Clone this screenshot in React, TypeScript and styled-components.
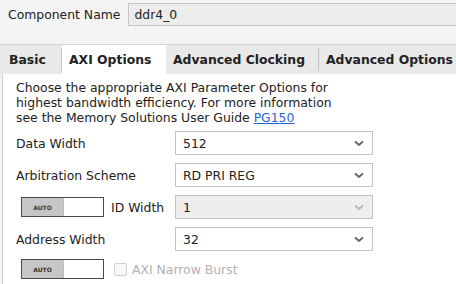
import styled, { createGlobalStyle } from 'styled-components';

const GlobalStyle = createGlobalStyle`
  html, body {
    margin: 0;
    padding: 0;
    background: #f4f4f4;
  }
  body {
    font-family: "DejaVu Sans", "Liberation Sans", sans-serif;
    font-size: 12.4px;
    color: #222;
  }
`;

const Page = styled.div`
  width: 456px;
  height: 284px;
  overflow: hidden;
  display: flex;
  flex-direction: column;
`;

const Header = styled.div`
  flex-shrink: 0;
  display: flex;
  align-items: center;
  gap: 8px;
  padding: 3px 0 0 8px;
  height: 23px;
`;

const NameInput = styled.div`
  flex: 1;
  height: 21px;
  display: flex;
  align-items: center;
  padding-left: 5px;
  background: #ececec;
  border: 1px solid #c6c6c6;
  border-right: none;
`;

const TabBar = styled.div`
  flex-shrink: 0;
  margin-top: 18px;
  display: flex;
  height: 29px;
  border-top: 1px solid #d2d2d2;
  padding-left: 2px;
  background: #e9e9e9;
`;

const Tab = styled.div<{ $active?: boolean; $width?: number; $divider?: boolean }>`
  display: flex;
  align-items: center;
  box-sizing: border-box;
  width: ${({ $width }) => ($width ? `${$width}px` : 'auto')};
  flex: ${({ $width }) => ($width ? 'none' : '1')};
  padding-left: 7px;
  font-weight: bold;
  white-space: nowrap;
  background: ${({ $active }) => ($active ? '#ffffff' : '#e9e9e9')};
  position: relative;
  &::after {
    content: '';
    display: ${({ $divider }) => ($divider ? 'block' : 'none')};
    position: absolute;
    right: 0;
    top: 3px;
    bottom: 3px;
    width: 1px;
    background: #c4c4c4;
  }
`;

const Panel = styled.div`
  flex: 1;
  margin-left: 2px;
  border-left: 1px solid #cfcfcf;
  background: #ffffff;
  padding: 6px 0 0 13px;
`;

const Intro = styled.p`
  margin: 0 0 6px 0;
  line-height: 15px;
  white-space: nowrap;
`;

const Link = styled.a`
  color: #1f63d8;
  text-decoration: underline;
`;

const Form = styled.div`
  display: grid;
  grid-template-columns: 159px 198px;
  row-gap: 8px;
  align-items: center;
`;

const Label = styled.span<{ $disabled?: boolean }>`
  color: ${({ $disabled }) => ($disabled ? '#b2b2b2' : '#222')};
  white-space: nowrap;
`;

const LabelCell = styled.div`
  display: flex;
  align-items: center;
  gap: 7px;
`;

const SelectBox = styled.div<{ $disabled?: boolean }>`
  height: 22px;
  display: flex;
  align-items: center;
  justify-content: space-between;
  padding: 0 8px 0 7px;
  border: 1px solid #c4c4c4;
  background: ${({ $disabled }) => ($disabled ? '#eeeeee' : '#ffffff')};
  color: #222;
`;

const Toggle = styled.div`
  flex-shrink: 0;
  margin-left: 5px;
  width: 83px;
  height: 20px;
  display: flex;
  border: 1px solid #4a4a4a;
  box-sizing: border-box;
  background: #ffffff;
`;

const ToggleKnob = styled.div`
  width: 41px;
  display: flex;
  align-items: center;
  justify-content: center;
  background: #c6c6c6;
  border-right: 1px solid #bdbdbd;
  font-size: 6px;
  font-weight: bold;
  color: #333;
`;

const CheckBox = styled.span`
  flex-shrink: 0;
  width: 11px;
  height: 11px;
  border: 1px solid #d0d0d0;
  border-radius: 2px;
  background: #f8f8f8;
  margin-left: 3px;
  margin-right: -2px;
`;

const Chevron = ({ disabled }: { disabled?: boolean }) => (
  <svg width="10" height="7" viewBox="0 0 10 7">
    <polyline
      points="1,1.5 5,5 9,1.5"
      fill="none"
      stroke={disabled ? '#b8b8b8' : '#666'}
      strokeWidth="2"
    />
  </svg>
);

const Select = ({ value, disabled }: { value: string; disabled?: boolean }) => (
  <SelectBox $disabled={disabled}>
    <span>{value}</span>
    <Chevron disabled={disabled} />
  </SelectBox>
);

const AutoToggle = () => (
  <Toggle>
    <ToggleKnob>AUTO</ToggleKnob>
  </Toggle>
);

export default function App() {
  return (
    <Page>
      <GlobalStyle />
      <Header>
        <span>Component Name</span>
        <NameInput>ddr4_0</NameInput>
      </Header>
      <TabBar>
        <Tab $width={60} $divider>Basic</Tab>
        <Tab $width={104} $active>AXI Options</Tab>
        <Tab $width={153} $divider>Advanced Clocking</Tab>
        <Tab>Advanced Options</Tab>
      </TabBar>
      <Panel>
        <Intro>
          Choose the appropriate AXI Parameter Options for
          <br />
          highest bandwidth efficiency. For more information
          <br />
          see the Memory Solutions User Guide <Link>PG150</Link>
        </Intro>
        <Form>
          <Label>Data Width</Label>
          <Select value="512" />
          <Label>Arbitration Scheme</Label>
          <Select value="RD PRI REG" />
          <LabelCell>
            <AutoToggle />
            <Label>ID Width</Label>
          </LabelCell>
          <Select value="1" disabled />
          <Label>Address Width</Label>
          <Select value="32" />
          <LabelCell>
            <AutoToggle />
            <CheckBox />
            <Label $disabled>AXI Narrow Burst</Label>
          </LabelCell>
        </Form>
      </Panel>
    </Page>
  );
}
